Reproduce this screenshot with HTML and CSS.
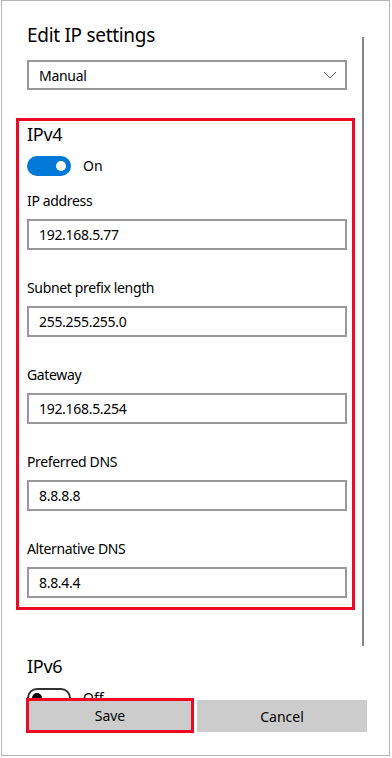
FILE: index.html
```html
<!DOCTYPE html>
<html lang="en">
<head>
  <meta charset="UTF-8">
  <meta name="viewport" content="width=device-width, initial-scale=1.0">
  <title>Edit IP settings</title>
  <link rel="stylesheet" href="styles.css">
</head>
<body>
  <div class="window">
    <div class="scrollbar"></div>

    <!-- Scrolling settings area -->
    <div class="content">
      <h1 class="title">Edit IP settings</h1>

      <div class="select">
        <span>Manual</span>
        <svg class="chevron" width="14" height="8" viewBox="0 0 14 8">
          <polyline points="1,1 7,7 13,1" fill="none" stroke="#6b6b6b" stroke-width="1"/>
        </svg>
      </div>

      <!-- IPv4 section -->
      <div class="section highlight">
        <h2 class="section-title">IPv4</h2>
        <div class="toggle-row">
          <div class="toggle on"><span class="knob"></span></div>
          <span class="toggle-label">On</span>
        </div>

        <div class="field">
          <div class="field-label">IP address</div>
          <div class="input">192.168.5.77</div>
        </div>
        <div class="field">
          <div class="field-label">Subnet prefix length</div>
          <div class="input">255.255.255.0</div>
        </div>
        <div class="field">
          <div class="field-label">Gateway</div>
          <div class="input">192.168.5.254</div>
        </div>
        <div class="field">
          <div class="field-label">Preferred DNS</div>
          <div class="input">8.8.8.8</div>
        </div>
        <div class="field">
          <div class="field-label">Alternative DNS</div>
          <div class="input">8.8.4.4</div>
        </div>
      </div>

      <!-- IPv6 section -->
      <div class="section ipv6">
        <h2 class="section-title">IPv6</h2>
        <div class="toggle-row">
          <div class="toggle off"><span class="knob"></span></div>
          <span class="toggle-label">Off</span>
        </div>
      </div>
    </div>

    <!-- Buttons -->
    <div class="footer">
      <button class="btn btn-save">Save</button>
      <button class="btn btn-cancel">Cancel</button>
    </div>
  </div>
</body>
</html>
```

FILE: styles.css
```css
/* Global */
body {
  margin: 0;
  padding: 0;
  background: #fff;
  font-family: "Noto Sans", sans-serif;
  color: #000;
}

.window {
  position: relative;
  box-sizing: border-box;
  margin-left: 1px;
  width: 389px;
  height: 756px;
  border: 1px solid #b4b4b4;
  display: flex;
  flex-direction: column;
  background: #fff;
}

.scrollbar {
  position: absolute;
  left: 360px;
  top: 36px;
  width: 2px;
  height: 609px;
  background: #868686;
}

/* Content */
.content {
  height: 697px;
  overflow: hidden;
  box-sizing: border-box;
  padding: 20px 0 0 25px;
}

.title {
  margin: 0;
  font-size: 19px;
  font-weight: normal;
  line-height: 28px;
  letter-spacing: -0.3px;
}

.select {
  box-sizing: border-box;
  width: 320px;
  height: 30px;
  margin-top: 11px;
  border: 2px solid #999;
  padding: 0 8px 0 10px;
  display: flex;
  align-items: center;
  justify-content: space-between;
  font-size: 14px;
  letter-spacing: -0.3px;
}

.section-title {
  margin: 0;
  font-size: 18px;
  font-weight: normal;
  line-height: 24px;
  letter-spacing: -0.3px;
}

.highlight {
  box-sizing: border-box;
  width: 339px;
  margin: 28px 0 0 -11px;
  border: 3px solid #ee0a24;
  padding: 1px 5px 9px 8px;
}

.ipv6 {
  margin-top: 44px;
}

/* Toggle switch */
.toggle-row {
  display: flex;
  align-items: center;
  margin-top: 10px;
}

.toggle {
  box-sizing: border-box;
  width: 44px;
  height: 20px;
  border-radius: 10px;
  display: flex;
  align-items: center;
}

.toggle.on {
  background: #0078d7;
  justify-content: flex-end;
  padding-right: 5px;
}

.toggle.off {
  border: 2px solid #333;
  padding-left: 3px;
}

.knob {
  width: 10px;
  height: 10px;
  border-radius: 50%;
  background: #fff;
}

.toggle.off .knob {
  background: #000;
}

.toggle-label {
  margin-left: 12px;
  font-size: 14px;
  line-height: 20px;
}

/* Fields */
.field {
  margin-top: 28px;
}

.toggle-row + .field {
  margin-top: 15px;
}

.field-label {
  font-size: 14px;
  line-height: 20px;
  margin-bottom: 8px;
  letter-spacing: -0.35px;
}

.input {
  box-sizing: border-box;
  width: 320px;
  height: 31px;
  border: 2px solid #999;
  padding-left: 10px;
  display: flex;
  align-items: center;
  font-size: 14px;
  letter-spacing: -0.3px;
}

/* Footer buttons */
.footer {
  display: flex;
  align-items: flex-start;
  padding-left: 24px;
}

.btn {
  font-family: "Noto Sans", sans-serif;
  font-size: 14px;
  color: #000;
  background: #ccc;
  border: none;
  padding: 0;
  margin: 0;
}

.btn-save {
  width: 168px;
  height: 35px;
  border: 3px solid #ee0a24;
}

.btn-cancel {
  width: 170px;
  height: 32px;
  margin-top: 2px;
  margin-left: 3px;
}
```
